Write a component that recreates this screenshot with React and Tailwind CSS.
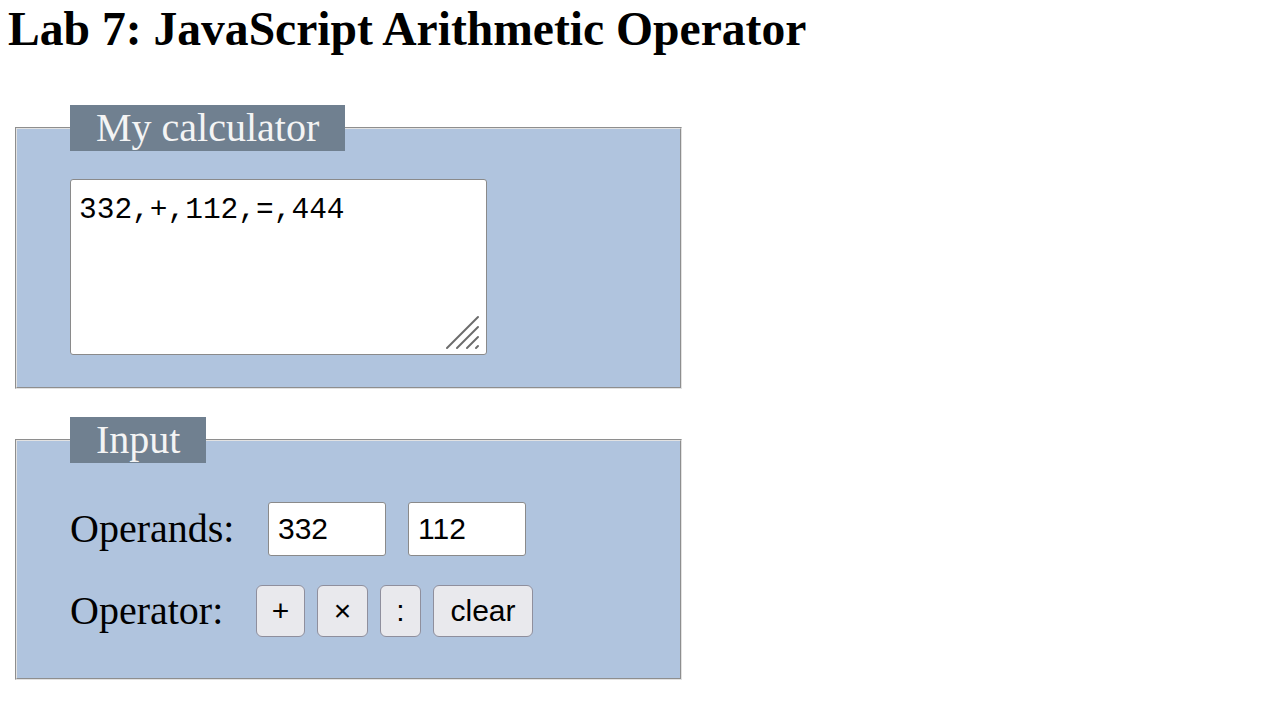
import React, { useState } from 'react'

const serif = { fontFamily: '"Liberation Serif", "Times New Roman", serif' }

const Legend = ({ children }) => (
  <legend className="bg-[#708090] text-[#f4f4f4] text-[40px] leading-[46px] px-[26px]" style={serif}>
    {children}
  </legend>
)

const OpButton = ({ label, width, onClick }) => (
  <button
    onClick={onClick}
    className={`h-[52px] ${width} bg-[#e9e9ed] border border-[#8f8f9d] rounded-[6px] text-[30px] text-black leading-none flex items-center justify-center font-['Liberation_Sans',Arial,sans-serif]`}
  >
    {label}
  </button>
)

export default function App() {
  const [a, setA] = useState('332')
  const [b, setB] = useState('112')
  const [log, setLog] = useState('332,+,112,=,444')

  const calc = (op) => {
    const x = parseFloat(a)
    const y = parseFloat(b)
    let r = 0
    if (op === '+') r = x + y
    if (op === '×') r = x * y
    if (op === ':') r = x / y
    setLog(`${a},${op},${b},=,${r}`)
  }

  return (
    <div className="min-h-screen bg-white text-black pl-[8px]" style={serif}>
      <h1 className="text-[47.6px] font-bold leading-[55px] pt-[2px]">Lab 7: JavaScript Arithmetic Operator</h1>

      {/* My calculator */}
      <fieldset className="ml-[7px] mt-[48px] w-[667px] bg-[#b0c4de] border-2 [border-style:groove] border-[#e2e2e2] pl-[53px] pt-[28px] pb-[32px]">
        <Legend>My calculator</Legend>
        <div className="relative w-[417px] h-[176px]">
          <textarea
            value={log}
            onChange={(e) => setLog(e.target.value)}
            className="w-full h-full resize-none bg-white border border-[#8a8a8a] rounded-[3px] pl-[8px] pt-[13px] text-[29.5px] leading-[34px] text-black outline-none"
            style={{ fontFamily: '"Liberation Mono", "Courier New", monospace' }}
          />
          <svg className="absolute right-[6px] bottom-[5px] pointer-events-none" width="36" height="36" viewBox="0 0 36 36">
            <g stroke="#6b6b6b" strokeWidth="2" strokeLinecap="round">
              <line x1="2" y1="34" x2="33" y2="3" />
              <line x1="12" y1="34" x2="33" y2="13" />
              <line x1="22" y1="34" x2="33" y2="23" />
              <line x1="31" y1="34" x2="33" y2="32" />
            </g>
          </svg>
        </div>
      </fieldset>

      {/* Input */}
      <fieldset className="ml-[7px] mt-[28px] w-[667px] bg-[#b0c4de] border-2 [border-style:groove] border-[#e2e2e2] pl-[53px] pt-[39px] pb-[41px]">
        <Legend>Input</Legend>
        <div className="flex flex-col gap-[29px]">
          <div className="flex items-center">
            <span className="text-[40px] w-[198px] leading-none">Operands:</span>
            <div className="flex gap-[22px]">
              {[[a, setA], [b, setB]].map(([v, set], i) => (
                <input
                  key={i}
                  value={v}
                  onChange={(e) => set(e.target.value)}
                  className="w-[118px] h-[54px] bg-white border border-[#8a8a8a] rounded-[3px] pl-[9px] text-[30px] text-black outline-none font-['Liberation_Sans',Arial,sans-serif]"
                />
              ))}
            </div>
          </div>
          <div className="flex items-center">
            <span className="text-[40px] w-[186px] leading-none">Operator:</span>
            <div className="flex gap-[12px]">
              <OpButton label="+" width="w-[49px]" onClick={() => calc('+')} />
              <OpButton label="×" width="w-[51px]" onClick={() => calc('×')} />
              <OpButton label=":" width="w-[41px]" onClick={() => calc(':')} />
              <OpButton label="clear" width="w-[100px]" onClick={() => { setA(''); setB(''); setLog('') }} />
            </div>
          </div>
        </div>
      </fieldset>
    </div>
  )
}
